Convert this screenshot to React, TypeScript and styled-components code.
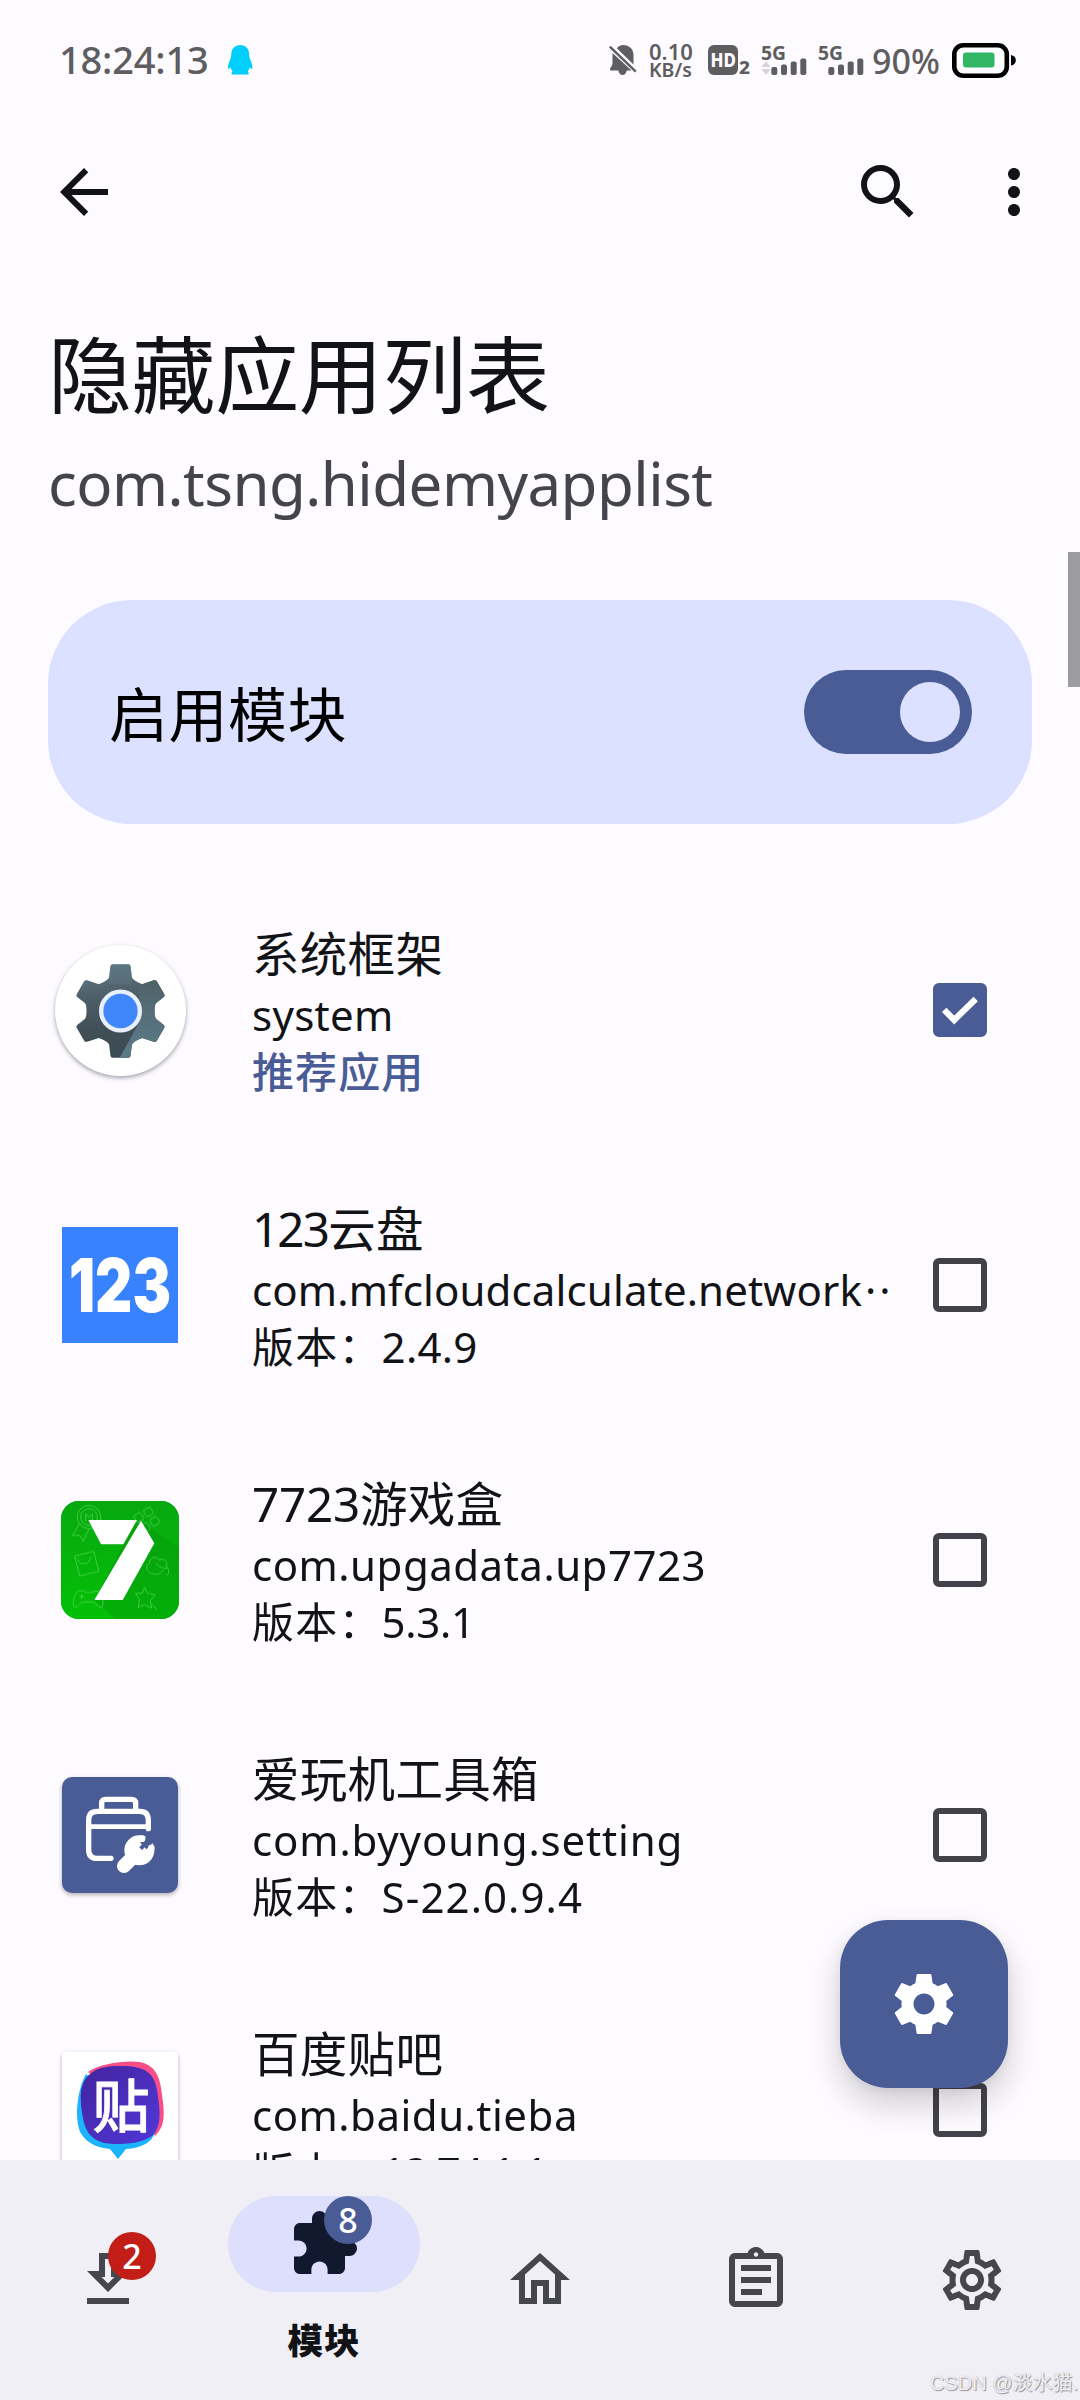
import React from 'react';
import styled, { createGlobalStyle } from 'styled-components';
import {
  MdArrowBack,
  MdSearch,
  MdMoreVert,
  MdOutlineSettings,
  MdExtension,
  MdOutlineGetApp,
  MdOutlineHome,
  MdOutlineAssignment,
} from 'react-icons/md';

const LATIN = '"Noto Sans", "Noto Sans CJK SC", sans-serif';

const color = {
  surface: '#fdfbff',
  nav: '#f0eff5',
  primary: '#4a5c96',
  container: '#dbe1ff',
  text: '#121316',
  muted: '#46464f',
  outline: '#434149',
  status: '#5e5d60',
  danger: '#c21e17',
};

const GlobalStyle = createGlobalStyle`
  *, *::before, *::after { box-sizing: border-box; }
  body {
    margin: 0;
    background: ${color.surface};
    font-family: ${LATIN};
    color: ${color.text};
  }
  svg { display: block; flex: none; overflow: visible; }
`;

const Screen = styled.div`
  position: relative;
  width: 1080px;
  height: 2400px;
  display: flex;
  flex-direction: column;
  overflow: hidden;
  background: ${color.surface};
`;

/* ---------- status bar ---------- */

const StatusBar = styled.div`
  height: 120px;
  flex: none;
  display: flex;
  align-items: center;
  justify-content: space-between;
  padding: 0 64px 0 59px;
  color: ${color.status};
`;

const StatusSide = styled.div<{ $gap: number }>`
  display: flex;
  align-items: center;
  gap: ${(p) => p.$gap}px;
`;

const Clock = styled.span`
  width: 152px;
  font-size: 38px;
  line-height: 56px;
  font-weight: 500;
  letter-spacing: -0.2px;
  padding-bottom: 3px;
  white-space: nowrap;
`;

const NetSpeed = styled.div`
  width: 46px;
  display: flex;
  flex-direction: column;
  font-weight: 600;
  white-space: nowrap;
`;

const NetLine = styled.span<{ $size: number; $height: number }>`
  font-size: ${(p) => p.$size}px;
  line-height: ${(p) => p.$height}px;
`;

const Percent = styled.span`
  width: 69px;
  margin-left: -4px;
  margin-right: -1px;
  font-size: 34px;
  line-height: 48px;
  font-weight: 500;
  padding-top: 1px;
`;

/* ---------- toolbar and header ---------- */

const Toolbar = styled.div`
  flex: none;
  height: 144px;
  display: flex;
  align-items: center;
  justify-content: space-between;
  padding: 0 30px 0 48px;
`;

const IconButton = styled.button`
  width: 72px;
  height: 72px;
  padding: 0;
  border: 0;
  background: none;
  color: ${color.text};
  font-size: 72px;
`;

const Actions = styled.div`
  display: flex;
  gap: 54px;
`;

const Header = styled.header`
  flex: none;
  padding: 61px 48px 0;
`;

const Title = styled.h1`
  margin: 0;
  font-size: 84px;
  line-height: 100px;
  font-weight: 400;
  letter-spacing: -0.4px;
`;

const Subtitle = styled.div`
  margin-top: 16px;
  font-size: 60px;
  line-height: 84px;
  letter-spacing: -0.55px;
  color: #45444c;
`;

/* ---------- enable card ---------- */

const EnableCard = styled.div`
  flex: none;
  height: 224px;
  margin: 75px 48px 0;
  padding: 0 60px 0 61px;
  border-radius: 84px;
  background: ${color.container};
  display: flex;
  align-items: center;
  justify-content: space-between;
`;

const EnableLabel = styled.span`
  padding-top: 3px;
  font-size: 59px;
  line-height: 80px;
  letter-spacing: 0.5px;
  color: #000;
`;

const Switch = styled.div`
  width: 168px;
  height: 84px;
  padding: 12px;
  border-radius: 42px;
  background: ${color.primary};
  display: flex;
  justify-content: flex-end;
`;

const Thumb = styled.div`
  width: 60px;
  height: 60px;
  border-radius: 50%;
  background: ${color.container};
`;

/* ---------- app list ---------- */

const Content = styled.main`
  flex: 1;
  min-height: 0;
  overflow: hidden;
  display: flex;
  flex-direction: column;
`;

const List = styled.div`
  margin-top: 49px;
  flex: none;
`;

const Row = styled.div`
  height: 275px;
  padding: 0 93px 1px 54px;
  display: flex;
  align-items: center;
`;

const IconCell = styled.div`
  width: 132px;
  flex: none;
  display: flex;
  justify-content: center;
`;

const RowText = styled.div`
  flex: 1;
  min-width: 0;
  margin: 3px 0 0 66px;
  white-space: nowrap;
`;

const AppName = styled.div`
  font-size: 47.5px;
  line-height: 61px;
  padding-bottom: 2px;
  letter-spacing: 0.3px;
`;

const NameDigits = styled.span<{ $spacing: number }>`
  letter-spacing: ${(p) => p.$spacing}px;
`;

const AppLine = styled.div<{ $spacing?: number }>`
  font-size: 42px;
  line-height: 57px;
  letter-spacing: ${(p) => p.$spacing ?? 0.5}px;
`;

const Recommended = styled(AppLine)`
  letter-spacing: 1.1px;
  font-weight: 500;
  color: ${color.primary};
`;

const Prefix = styled.span`
  letter-spacing: 1.2px;
`;

const Cut = styled.span`
  margin-left: 3px;
  letter-spacing: 2.8px;
`;

const CheckBox = styled.div<{ $checked?: boolean }>`
  width: 54px;
  height: 54px;
  flex: none;
  border-radius: 6px;
  border: 6px solid ${(p) => (p.$checked ? color.primary : color.outline)};
  background: ${(p) => (p.$checked ? color.primary : 'transparent')};
  display: flex;
  align-items: center;
  justify-content: center;
`;

const IconTile = styled.div<{ $radius: number; $bg: string; $shadow?: boolean; $size?: number }>`
  width: ${(p) => p.$size ?? 116}px;
  height: ${(p) => p.$size ?? 116}px;
  overflow: hidden;
  border-radius: ${(p) => p.$radius}px;
  background: ${(p) => p.$bg};
  box-shadow: ${(p) => (p.$shadow ? '0 2px 4px rgba(0, 0, 0, 0.3)' : 'none')};
`;

const IconDisc = styled.div`
  width: 131px;
  height: 131px;
  border-radius: 50%;
  background: #fff;
  box-shadow: 0 2px 4px rgba(0, 0, 0, 0.35);
`;

/* ---------- floating parts ---------- */

const Fab = styled.button`
  position: absolute;
  left: 840px;
  top: 1920px;
  width: 168px;
  height: 168px;
  padding: 0;
  border: 0;
  border-radius: 48px;
  background: ${color.primary};
  display: flex;
  align-items: center;
  justify-content: center;
  box-shadow: 0 16px 32px rgba(20, 10, 30, 0.2), 0 2px 12px rgba(20, 10, 30, 0.06);
`;

const ScrollThumb = styled.div`
  position: absolute;
  right: 0;
  top: 552px;
  width: 12px;
  height: 135px;
  background: #9c9b9d;
`;

const Watermark = styled.div`
  position: absolute;
  right: 2px;
  bottom: 4px;
  font-family: 'Liberation Sans', 'Noto Sans CJK SC', sans-serif;
  font-size: 20px;
  line-height: 26px;
  white-space: nowrap;
  color: #f0f0f4;
  text-shadow: 1px 1px 1px #939398, 0 0 1px #b4b4ba;
`;

/* ---------- bottom navigation ---------- */

const NavBar = styled.nav`
  flex: none;
  height: 240px;
  display: flex;
  background: ${color.nav};
`;

const NavItem = styled.div<{ $active?: boolean }>`
  flex: 1;
  display: flex;
  flex-direction: column;
  align-items: center;
  justify-content: ${(p) => (p.$active ? 'flex-start' : 'center')};
  padding-top: ${(p) => (p.$active ? 36 : 0)}px;
  color: ${color.muted};
  font-size: 72px;
`;

const Pill = styled.div`
  width: 192px;
  height: 96px;
  border-radius: 48px;
  background: #dedffc;
  color: #12182e;
  display: flex;
  align-items: center;
  justify-content: center;
`;

const BadgeAnchor = styled.div`
  position: relative;
  width: 72px;
  height: 72px;
`;

const Badge = styled.span<{ $bg: string }>`
  position: absolute;
  left: 36px;
  top: -12px;
  width: 48px;
  height: 48px;
  border-radius: 50%;
  background: ${(p) => p.$bg};
  color: #fff;
  font-size: 34px;
  line-height: 48px;
  font-weight: 500;
  text-align: center;
`;

const NavLabel = styled.span`
  margin-top: 24px;
  font-size: 35.5px;
  line-height: 48px;
  font-weight: 800;
  letter-spacing: 1px;
  color: ${color.text};
`;

/* ---------- drawings ---------- */

const Penguin = () => (
  <svg width="25" height="30" viewBox="0 0 25 30" fill="#00cffb">
    <path d="M12.3 0C17.5 0 21 3.7 21.2 9c0 1.6.1 3.4.9 5.2 1.3 3 2.3 5.6 2.3 8.3 0 1.9-1 1.7-2.6-.3-.4 1.700-1 3-2.200 4.300.8.500 1 1 1 1.700v1.300H3.600v-1.300c0-.8.300-1.300 1-1.700-1.100-1.300-1.700-2.600-2.100-4.300C1 24.200 0 24.400 0 22.500c0-2.700 1-5.300 2.300-8.300.9-1.800 1-3.600 1-5.200C3.500 3.700 7 0 12.300 0z" />
  </svg>
);

const BellOff = () => (
  <svg width="28" height="30" viewBox="0 0 28 30">
    <g fill={color.status}>
      <path d="M7.800 3.200C9.200 1.300 11.300 0 14.300 0 20 0 24.500 4.200 24.500 10v9.500z" />
      <path d="M3.500 8L22.500 25.500h-4.700c-.6 2.600-2 4.500-4.200 4.500s-3.800-1.900-4.300-4.500H1.300c-.5-1.500-.3-2.600.8-3.800 1-1.100 1.400-2.200 1.400-4z" />
    </g>
    <path d="M0.800 1.600L26.800 26.600" stroke={color.status} strokeWidth="2.400" />
  </svg>
);

const HdBadge = () => (
  <svg width="43" height="30" viewBox="0 0 43 30" fill={color.status}>
    <rect x="1" y="0" width="30" height="30" rx="6" />
    <text x="3.500" y="22.300" fontSize="20" fontWeight="800" fill="#fdfbff" textLength="25.500" lengthAdjust="spacingAndGlyphs">
      HD
    </text>
    <text x="32" y="29" fontSize="17" fontWeight="800" textLength="11" lengthAdjust="spacingAndGlyphs">
      2
    </text>
  </svg>
);

const Signal = ({ arrows }: { arrows?: boolean }) => (
  <svg width="45" height="30" viewBox="0 0 45 30" fill={color.status}>
    <text x="-1" y="14.500" fontSize="20" fontWeight="700" textLength="25" lengthAdjust="spacingAndGlyphs">
      5G
    </text>
    {arrows && (
      <g fill="#d6d4d8">
        <path d="M4 16l4.500 6H-.5z" />
        <path d="M4 30l4.500-6H-.5z" />
      </g>
    )}
    <rect x="9.300" y="22" width="6" height="8" rx="2" />
    <rect x="19" y="19.500" width="6" height="10.500" rx="2" />
    <rect x="28.700" y="16.500" width="6" height="13.500" rx="2" />
    <rect x="38.300" y="13.500" width="6" height="16.500" rx="2" />
  </svg>
);

const Battery = () => (
  <svg width="64" height="36" viewBox="0 0 64 36">
    <rect x="2.300" y="3.300" width="52.500" height="30.500" rx="9" fill="#fff" stroke="#000" strokeWidth="4.600" />
    <rect x="11" y="10.500" width="31.500" height="15" rx="3" fill="#31b765" />
    <path d="M59 13c3 .5 4.800 2.500 4.800 5.200S62 23 59 23.500z" fill="#000" />
  </svg>
);

const GEAR =
  'M19.430 12.980c.04-.32.07-.64.07-.98s-.03-.66-.07-.98l2.110-1.650c.19-.15.24-.42.12-.64l-2-3.460c-.12-.22-.39-.3-.61-.22l-2.490 1c-.52-.4-1.080-.73-1.690-.98l-.38-2.650C14.460 2.180 14.250 2 14 2h-4c-.25 0-.46.18-.49.42l-.38 2.650c-.61.25-1.170.59-1.690.98l-2.490-1c-.23-.09-.49 0-.61.22l-2 3.460c-.13.22-.07.49.12.64l2.110 1.650c-.04.32-.07.65-.07.98s.03.66.07.98l-2.110 1.650c-.19.15-.24.42-.12.64l2 3.460c.12.22.39.3.61.22l2.490-1c.52.4 1.080.73 1.690.98l.38 2.650c.03.24.24.42.49.42h4c.25 0 .46-.18.49-.42l.38-2.650c.61-.25 1.170-.59 1.690-.98l2.490 1c.23.09.49 0 .61-.22l2-3.460c.12-.22.07-.49-.12-.64l-2.110-1.650zM12 15.500c-1.930 0-3.500-1.570-3.500-3.500s1.570-3.500 3.500-3.500 3.500 1.570 3.500 3.500-1.570 3.500-3.500 3.500z';

const FabGear = () => (
  <svg width="72" height="72" viewBox="0 0 24 24" fill="#fff">
    <path d={GEAR} />
  </svg>
);

const Tick = () => (
  <svg width="54" height="54" viewBox="0 0 54 54">
    <path d="M11.200 26.800L21.200 37L42.700 16" fill="none" stroke="#fff" strokeWidth="6.200" />
  </svg>
);

const SYSTEM_GEAR =
  'M246 190H294Q299 190 300 195L304 228Q306 238 335 250L370 238Q376 236 379 241L401 279Q404 285 399 289L378 305Q372 309 372 330Q372 351 378 355L399 371Q404 375 401 381L379 419Q376 424 370 422L335 411Q306 422 304 432L300 465Q299 470 294 470H246Q241 470 240 465L236 432Q234 422 205 411L170 422Q164 424 161 419L139 381Q136 375 141 371L162 355Q168 351 168 330Q168 309 162 305L141 289Q136 285 139 279L161 241Q164 236 170 238L205 250Q234 238 236 228L240 195Q241 190 246 190Z';

const SystemIcon = () => (
  <IconDisc>
    <svg width="131" height="131" viewBox="73.500 132 393 393">
      <defs>
        <linearGradient id="gearBase" x1="0.300" y1="0" x2="0.450" y2="1">
          <stop offset="0" stopColor="#5f7884" />
          <stop offset="0.300" stopColor="#50616b" />
          <stop offset="0.650" stopColor="#414f57" />
          <stop offset="1" stopColor="#3c4a51" />
        </linearGradient>
        <linearGradient id="gearLight" x1="0.600" y1="0" x2="0.500" y2="1">
          <stop offset="0" stopColor="#4f6067" />
          <stop offset="0.500" stopColor="#56707b" />
          <stop offset="1" stopColor="#5b7b89" />
        </linearGradient>
        <clipPath id="gearClip">
          <path d={SYSTEM_GEAR} />
        </clipPath>
      </defs>
      <path d={SYSTEM_GEAR} fill="url(#gearBase)" />
      <g clipPath="url(#gearClip)">
        <path d="M265 475L320 375L332 310L320 262L345 235L420 230V475Z" fill="url(#gearLight)" />
        <path d="M236 190H304V250H236Z" fill="#5c7480" opacity="0.600" />
      </g>
      <circle cx="270" cy="330" r="58" fill="#3f86fb" stroke="#e8effc" strokeWidth="13" />
    </svg>
  </IconDisc>
);

const Pan123Icon = () => (
  <IconTile $radius={0} $bg="#3882fe">
    <svg width="116" height="116" viewBox="0 0 116 116">
      <text
        x="7"
        y="85"
        fontFamily="Inter, sans-serif"
        fontSize="74"
        fontWeight="900"
        fill="#fff"
        textLength="102"
        lengthAdjust="spacingAndGlyphs"
      >
        123
      </text>
    </svg>
  </IconTile>
);

const GameBoxIcon = () => (
  <IconTile $radius={18} $bg="#06b40c" $size={118}>
    <svg width="118" height="118" viewBox="63 63 354 354">
      <defs>
        <linearGradient id="boxGreen" x1="0" y1="0" x2="0" y2="1">
          <stop offset="0" stopColor="#08a80f" />
          <stop offset="1" stopColor="#03c006" />
        </linearGradient>
      </defs>
      <rect x="63" y="63" width="354" height="354" fill="url(#boxGreen)" />
      <path d="M303 122L417 205V417H225L163 360L250 195L183 193Z" fill="#078f0d" opacity="0.350" />
      <g fill="none" stroke="#5fdc62" strokeWidth="2.500" opacity="0.800" strokeLinejoin="round">
        <circle cx="147" cy="111" r="35" />
        <circle cx="147" cy="111" r="25" />
        <path d="M137 124V102l10 10 10-10v22M117 132L98 167l22-1 10 18 17-38" />
        <rect x="313" y="84" width="24" height="24" rx="6" transform="rotate(-28 325 96)" />
        <rect x="284" y="100" width="24" height="24" rx="6" transform="rotate(-28 296 112)" />
        <rect x="332" y="112" width="24" height="24" rx="6" transform="rotate(-28 344 124)" />
        <rect x="304" y="130" width="24" height="24" rx="6" transform="rotate(-28 316 142)" />
        <path d="M104 228L161 214L177 274L119 288ZM113 238Q119 254 134 250Q152 248 151 231" />
        <path d="M334 279C318 274 314 256 329 250C326 232 350 226 357 240C374 232 386 248 378 258C392 270 384 288 380 286M334 279C350 288 364 280 372 268M348 250C356 262 372 266 384 264" />
        <path d="M101 374C98 356 108 332 120 332C134 332 136 338 148 338C160 338 164 330 176 334C188 342 192 366 187 380C178 388 170 370 160 366H128C118 368 112 384 104 382Q101 380 101 374ZM118 350H132M125 343V357" />
        <path d="M314 322L323 340L346 344L331 362L335 384L314 374L294 382L299 358L286 340L306 340ZM338 376L352 390" />
      </g>
      <path d="M145 120H291L250 193H183Z" fill="#fff" />
      <path d="M303 122L343 190L248 360H163Z" fill="#fff" />
    </svg>
  </IconTile>
);

const ToolboxIcon = () => (
  <IconTile $radius={10} $bg={color.primary} $shadow>
    <svg width="116" height="116" viewBox="66 51 348 348">
      <g fill="none" stroke="#fff" strokeWidth="16" strokeLinecap="round">
        <path d="M185 150V130Q185 118 197 118H275Q287 118 287 130V150" />
        <path d="M325 206V180Q325 154 299 154H172Q146 154 146 180V269Q146 295 172 295H213" />
        <path d="M150 200H322" strokeWidth="14" />
      </g>
      <path d="M252 318L290 280" stroke="#fff" strokeWidth="42" strokeLinecap="round" />
      <circle cx="298" cy="271" r="45" fill="#fff" />
      <path d="M310 258L350 218" stroke={color.primary} strokeWidth="27" />
      <path d="M302 266L314 254" stroke={color.primary} strokeWidth="12" strokeLinejoin="round" />
      <circle cx="306" cy="236" r="10" fill="#fff" />
      <circle cx="334" cy="264" r="10" fill="#fff" />
    </svg>
  </IconTile>
);

const TiebaIcon = () => (
  <IconTile $radius={4} $bg="#fff" $shadow>
    <svg width="116" height="116" viewBox="0 0 116 116">
      <defs>
        <linearGradient id="tiebaFill" x1="0" y1="0" x2="1" y2="1">
          <stop offset="0" stopColor="#43239f" />
          <stop offset="1" stopColor="#5138d8" />
        </linearGradient>
      </defs>
      <path d="M26 20C40 10 74 7 84 12C98 18 99 34 101 50C103 68 101 76 93 84L80 60Z" fill="#fb4e86" />
      <path d="M24 22C14 40 12 72 20 83C27 93 38 96 48 97L56 107L64 97C79 96 90 91 93 80Z" fill="#1cb4fd" />
      <path
        d="M56 14C82 13 92 20 95 38C99 62 99 76 90 84C80 91 66 92 54 92C34 92 24 84 21 66C17 44 18 30 28 22C36 15 46 14 56 14Z"
        fill="url(#tiebaFill)"
      />
      <text x="59" y="75" fontSize="57" fontWeight="500" fill="#fff" stroke="#fff" strokeWidth="0.800" textAnchor="middle" fontFamily='"Noto Sans CJK SC", sans-serif'>
        贴
      </text>
    </svg>
  </IconTile>
);

/* ---------- data ---------- */

interface AppEntry {
  digits?: string;
  digitSpacing?: number;
  name: string;
  pkg: string;
  pkgSpacing?: number;
  cut?: boolean;
  version?: string;
  versionSpacing?: number;
  checked?: boolean;
  icon: React.ReactNode;
}

const apps: AppEntry[] = [
  { name: '系统框架', pkg: 'system', pkgSpacing: 0.3, checked: true, icon: <SystemIcon /> },
  {
    digits: '123',
    digitSpacing: -1.8,
    name: '云盘',
    pkg: 'com.mfcloudcalculate.network',
    pkgSpacing: 0.14,
    cut: true,
    version: '2.4.9',
    versionSpacing: 0.3,
    icon: <Pan123Icon />,
  },
  {
    digits: '7723',
    digitSpacing: -0.2,
    name: '游戏盒',
    pkg: 'com.upgadata.up7723',
    version: '5.3.1',
    versionSpacing: -0.3,
    icon: <GameBoxIcon />,
  },
  {
    name: '爱玩机工具箱',
    pkg: 'com.byyoung.setting',
    pkgSpacing: 0.85,
    version: 'S-22.0.9.4',
    versionSpacing: 1.1,
    icon: <ToolboxIcon />,
  },
  { name: '百度贴吧', pkg: 'com.baidu.tieba', version: '12.74.1.1', versionSpacing: -1.4, icon: <TiebaIcon /> },
];

export default function App() {
  return (
    <Screen>
      <GlobalStyle />
      <StatusBar>
        <StatusSide $gap={17}>
          <Clock>18:24:13</Clock>
          <Penguin />
        </StatusSide>
        <StatusSide $gap={12}>
          <BellOff />
          <NetSpeed>
            <NetLine $size={22} $height={19}>0.10</NetLine>
            <NetLine $size={19.5} $height={18}>KB/s</NetLine>
          </NetSpeed>
          <HdBadge />
          <Signal arrows />
          <Signal />
          <Percent>90%</Percent>
          <Battery />
        </StatusSide>
      </StatusBar>
      <Toolbar>
        <IconButton aria-label="返回">
          <MdArrowBack />
        </IconButton>
        <Actions>
          <IconButton aria-label="搜索">
            <MdSearch />
          </IconButton>
          <IconButton aria-label="更多">
            <MdMoreVert />
          </IconButton>
        </Actions>
      </Toolbar>
      <Content>
        <Header>
          <Title>隐藏应用列表</Title>
          <Subtitle>com.tsng.hidemyapplist</Subtitle>
        </Header>
        <EnableCard>
          <EnableLabel>启用模块</EnableLabel>
          <Switch>
            <Thumb />
          </Switch>
        </EnableCard>
        <List>
          {apps.map((app) => (
            <Row key={app.pkg}>
              <IconCell>{app.icon}</IconCell>
              <RowText>
                <AppName>
                  {app.digits && <NameDigits $spacing={app.digitSpacing ?? 0}>{app.digits}</NameDigits>}
                  {app.name}
                </AppName>
                <AppLine $spacing={app.pkgSpacing}>
                  {app.pkg}
                  {app.cut && <Cut>··</Cut>}
                </AppLine>
                {app.version ? (
                  <AppLine $spacing={app.versionSpacing}>
                    <Prefix>版本：</Prefix>
                    {app.version}
                  </AppLine>
                ) : (
                  <Recommended>推荐应用</Recommended>
                )}
              </RowText>
              <CheckBox $checked={app.checked}>{app.checked && <Tick />}</CheckBox>
            </Row>
          ))}
        </List>
      </Content>
      <NavBar>
        <NavItem>
          <BadgeAnchor>
            <MdOutlineGetApp />
            <Badge $bg={color.danger}>2</Badge>
          </BadgeAnchor>
        </NavItem>
        <NavItem $active>
          <Pill>
            <BadgeAnchor>
              <MdExtension />
              <Badge $bg={color.primary}>8</Badge>
            </BadgeAnchor>
          </Pill>
          <NavLabel>模块</NavLabel>
        </NavItem>
        <NavItem>
          <MdOutlineHome />
        </NavItem>
        <NavItem>
          <MdOutlineAssignment />
        </NavItem>
        <NavItem>
          <MdOutlineSettings />
        </NavItem>
      </NavBar>
      <Fab aria-label="设置">
        <FabGear />
      </Fab>
      <ScrollThumb />
      <Watermark>CSDN @淡水猫.</Watermark>
    </Screen>
  );
}
